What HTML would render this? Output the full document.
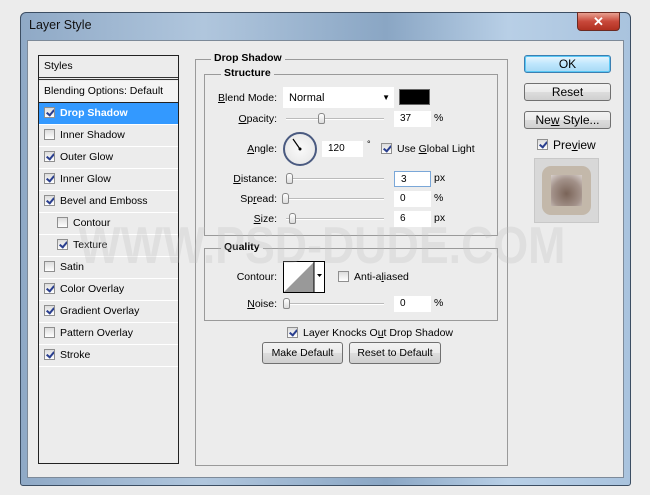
<!DOCTYPE html>
<html><head><style>
*{margin:0;padding:0;box-sizing:border-box}
body{width:650px;height:495px;background:#ececec;position:relative;overflow:hidden;font-family:"Liberation Sans",sans-serif;font-size:10.5px;color:#000}
.a{position:absolute}
.win{left:20px;top:12px;width:611px;height:474px;border:1px solid #3c4e63;border-radius:6px 6px 3px 3px;background:linear-gradient(90deg,#8fa9c6 0%,#b0c6dd 30%,#8aa6c4 60%,#b8cfe6 80%,#a9c3de 100%)}
.inner{left:27px;top:40px;width:597px;height:438px;background:#ececec;border:1px solid #7d8a99}
.wm{left:0px;top:218px;width:644px;text-align:center;font-size:52px;line-height:56px;font-weight:bold;color:rgba(190,190,190,0.28);white-space:nowrap;transform:scaleX(0.86);pointer-events:none}
.lp{left:38px;top:55px;width:141px;height:409px;border:1px solid #222;background:#ececec}
.row{position:absolute;left:0;width:139px;height:22px;border-bottom:1px solid #fff;line-height:21px;padding-left:5px;white-space:nowrap}
.cb{display:inline-block;width:11px;height:11px;border:1px solid #8f8f8f;background:linear-gradient(#dcdcdc,#fff);vertical-align:middle;margin-top:-2px;margin-right:5px;position:relative;overflow:hidden}
.cb.k::after{content:"";position:absolute;left:3px;top:0px;width:3px;height:6px;border:solid #2a3f8f;border-width:0 2px 2px 0;transform:rotate(40deg)}
.fs{border:1px solid #9a9a9a}
.lg{position:absolute;background:#ececec;font-weight:bold;padding:0 3px;font-size:10.5px}
.inp{position:absolute;background:#fff;height:16px;padding-left:6px;line-height:16px;font-size:10px}
.sl{position:absolute;height:2px;border-top:1px solid #bbb;border-bottom:1px solid #fff}
.th{position:absolute;width:7px;height:11px;border:1px solid #888;border-radius:3px 3px 2px 2px;background:linear-gradient(#fff,#ddd)}
.lbl{position:absolute;text-align:right;width:90px}
.btn{position:absolute;border:1px solid #707070;border-radius:3px;background:linear-gradient(#f2f2f2 0%,#ebebeb 50%,#dddddd 51%,#cfcfcf 100%);text-align:center;font-size:12px}
u{text-decoration:underline}
</style></head><body>
<div class="a win"></div>
<div class="a" style="left:29px;top:18px;font-size:12.5px;color:#111">Layer Style</div>
<div class="a" style="left:577px;top:12px;width:43px;height:19px;border:1px solid #6b2a22;border-radius:0 0 4px 4px;background:linear-gradient(#e8a090,#c8483a 50%,#b03020);color:#fff;text-align:center;font-weight:bold;font-size:13px;line-height:17px">✕</div>
<div class="a inner"></div>

<div class="a lp">
<div class="row" style="top:0;height:24px;line-height:21px;border-bottom:3px double #333">Styles</div>
<div class="row" style="top:25px;background:#f4f4f4;border-bottom:1px solid #222">Blending Options: Default</div>
<div class="row" style="top:47px;background:#3399ff;color:#fff;font-weight:bold"><span class="cb k"></span>Drop Shadow</div>
<div class="row" style="top:69px"><span class="cb"></span>Inner Shadow</div>
<div class="row" style="top:91px"><span class="cb k"></span>Outer Glow</div>
<div class="row" style="top:113px"><span class="cb k"></span>Inner Glow</div>
<div class="row" style="top:135px"><span class="cb k"></span>Bevel and Emboss</div>
<div class="row" style="top:157px;padding-left:18px"><span class="cb"></span>Contour</div>
<div class="row" style="top:179px;padding-left:18px"><span class="cb k"></span>Texture</div>
<div class="row" style="top:201px"><span class="cb"></span>Satin</div>
<div class="row" style="top:223px"><span class="cb k"></span>Color Overlay</div>
<div class="row" style="top:245px"><span class="cb k"></span>Gradient Overlay</div>
<div class="row" style="top:267px"><span class="cb"></span>Pattern Overlay</div>
<div class="row" style="top:289px"><span class="cb k"></span>Stroke</div>
</div>

<div class="a fs" style="left:195px;top:59px;width:313px;height:407px"></div>
<div class="lg" style="left:211px;top:52px">Drop Shadow</div>
<div class="a fs" style="left:204px;top:74px;width:294px;height:162px"></div>
<div class="lg" style="left:221px;top:67px">Structure</div>

<div class="lbl" style="left:187px;top:92px"><u>B</u>lend Mode:</div>
<div class="inp" style="left:283px;top:87px;width:111px;height:21px;line-height:22px;font-size:11px">Normal<span style="position:absolute;right:4px;top:0;font-size:8px">▼</span></div>
<div class="a" style="left:399px;top:89px;width:31px;height:16px;background:#000;border:1px solid #666"></div>

<div class="lbl" style="left:187px;top:113px"><u>O</u>pacity:</div>
<div class="sl" style="left:286px;top:118px;width:98px"></div><div class="th" style="left:318px;top:113px"></div>
<div class="inp" style="left:394px;top:111px;width:37px">37</div><div class="a" style="left:434px;top:112px">%</div>

<div class="lbl" style="left:187px;top:143px"><u>A</u>ngle:</div>
<div class="a" style="left:283px;top:132px;width:34px;height:34px;border-radius:50%;border:2px solid #4a5a80;background:radial-gradient(#fafafa,#e4e4e4)"></div>
<svg class="a" style="left:283px;top:132px" width="34" height="34"><line x1="10" y1="7" x2="17" y2="17" stroke="#000" stroke-width="1.2"/><circle cx="17" cy="17" r="1.5"/></svg>
<div class="inp" style="left:322px;top:141px;width:41px">120</div><div class="a" style="left:367px;top:139px;font-size:9px">°</div>
<div class="a" style="left:381px;top:143px"><span class="cb k"></span>Use <u>G</u>lobal Light</div>

<div class="lbl" style="left:187px;top:173px"><u>D</u>istance:</div>
<div class="sl" style="left:286px;top:178px;width:98px"></div><div class="th" style="left:286px;top:173px"></div>
<div class="inp" style="left:394px;top:171px;width:37px;border:1px solid #7aa7d8">3</div><div class="a" style="left:434px;top:172px">px</div>

<div class="lbl" style="left:187px;top:193px">Sp<u>r</u>ead:</div>
<div class="sl" style="left:286px;top:198px;width:98px"></div><div class="th" style="left:282px;top:193px"></div>
<div class="inp" style="left:394px;top:191px;width:37px">0</div><div class="a" style="left:434px;top:192px">%</div>

<div class="lbl" style="left:187px;top:213px"><u>S</u>ize:</div>
<div class="sl" style="left:286px;top:218px;width:98px"></div><div class="th" style="left:289px;top:213px"></div>
<div class="inp" style="left:394px;top:211px;width:37px">6</div><div class="a" style="left:434px;top:212px">px</div>

<div class="a fs" style="left:204px;top:248px;width:294px;height:73px"></div>
<div class="lg" style="left:221px;top:241px">Quality</div>
<div class="lbl" style="left:187px;top:271px">Contour:</div>
<svg class="a" style="left:283px;top:261px" width="42" height="32"><rect x="0.5" y="0.5" width="41" height="31" fill="#fff" stroke="#000"/><polygon points="1,31 31,1 31,31" fill="#999"/><line x1="31" y1="0" x2="31" y2="32" stroke="#000"/><polygon points="34,13 39,13 36.5,16" fill="#000"/></svg>
<div class="a" style="left:338px;top:271px"><span class="cb"></span>Anti-a<u>l</u>iased</div>
<div class="lbl" style="left:187px;top:298px"><u>N</u>oise:</div>
<div class="sl" style="left:286px;top:303px;width:98px"></div><div class="th" style="left:283px;top:298px"></div>
<div class="inp" style="left:394px;top:296px;width:37px">0</div><div class="a" style="left:434px;top:297px">%</div>

<div class="a" style="left:287px;top:327px"><span class="cb k"></span>Layer Knocks O<u>u</u>t Drop Shadow</div>
<div class="btn" style="left:262px;top:342px;width:81px;height:22px;line-height:20px;font-size:10.5px">Make Default</div>
<div class="btn" style="left:349px;top:342px;width:92px;height:22px;line-height:20px;font-size:10.5px">Reset to Default</div>

<div class="btn" style="left:524px;top:55px;width:87px;height:18px;line-height:16px;border:1px solid #3c7fb1;background:linear-gradient(#eaf6fd,#bee6fd 50%,#a7d9f5);box-shadow:inset 0 0 0 1px #5ac8f5">OK</div>
<div class="btn" style="left:524px;top:83px;width:87px;height:18px;line-height:16px">Reset</div>
<div class="btn" style="left:524px;top:111px;width:87px;height:18px;line-height:16px">Ne<u>w</u> Style...</div>
<div class="a" style="left:537px;top:138px;font-size:12px"><span class="cb k"></span>Pre<u>v</u>iew</div>
<div class="a" style="left:534px;top:158px;width:65px;height:65px;background:#d8d8d8;border:1px solid #c8c8c8"></div>
<div class="a" style="left:542px;top:166px;width:49px;height:49px;border-radius:9px;background:#c3b8aa"></div>
<div class="a" style="left:551px;top:175px;width:31px;height:31px;background:radial-gradient(circle at 50% 60%,#7a6458,#a3928a 60%,#d8d0cc)"></div>
<div class="a wm">WWW.PSD-DUDE.COM</div>
</body></html>
